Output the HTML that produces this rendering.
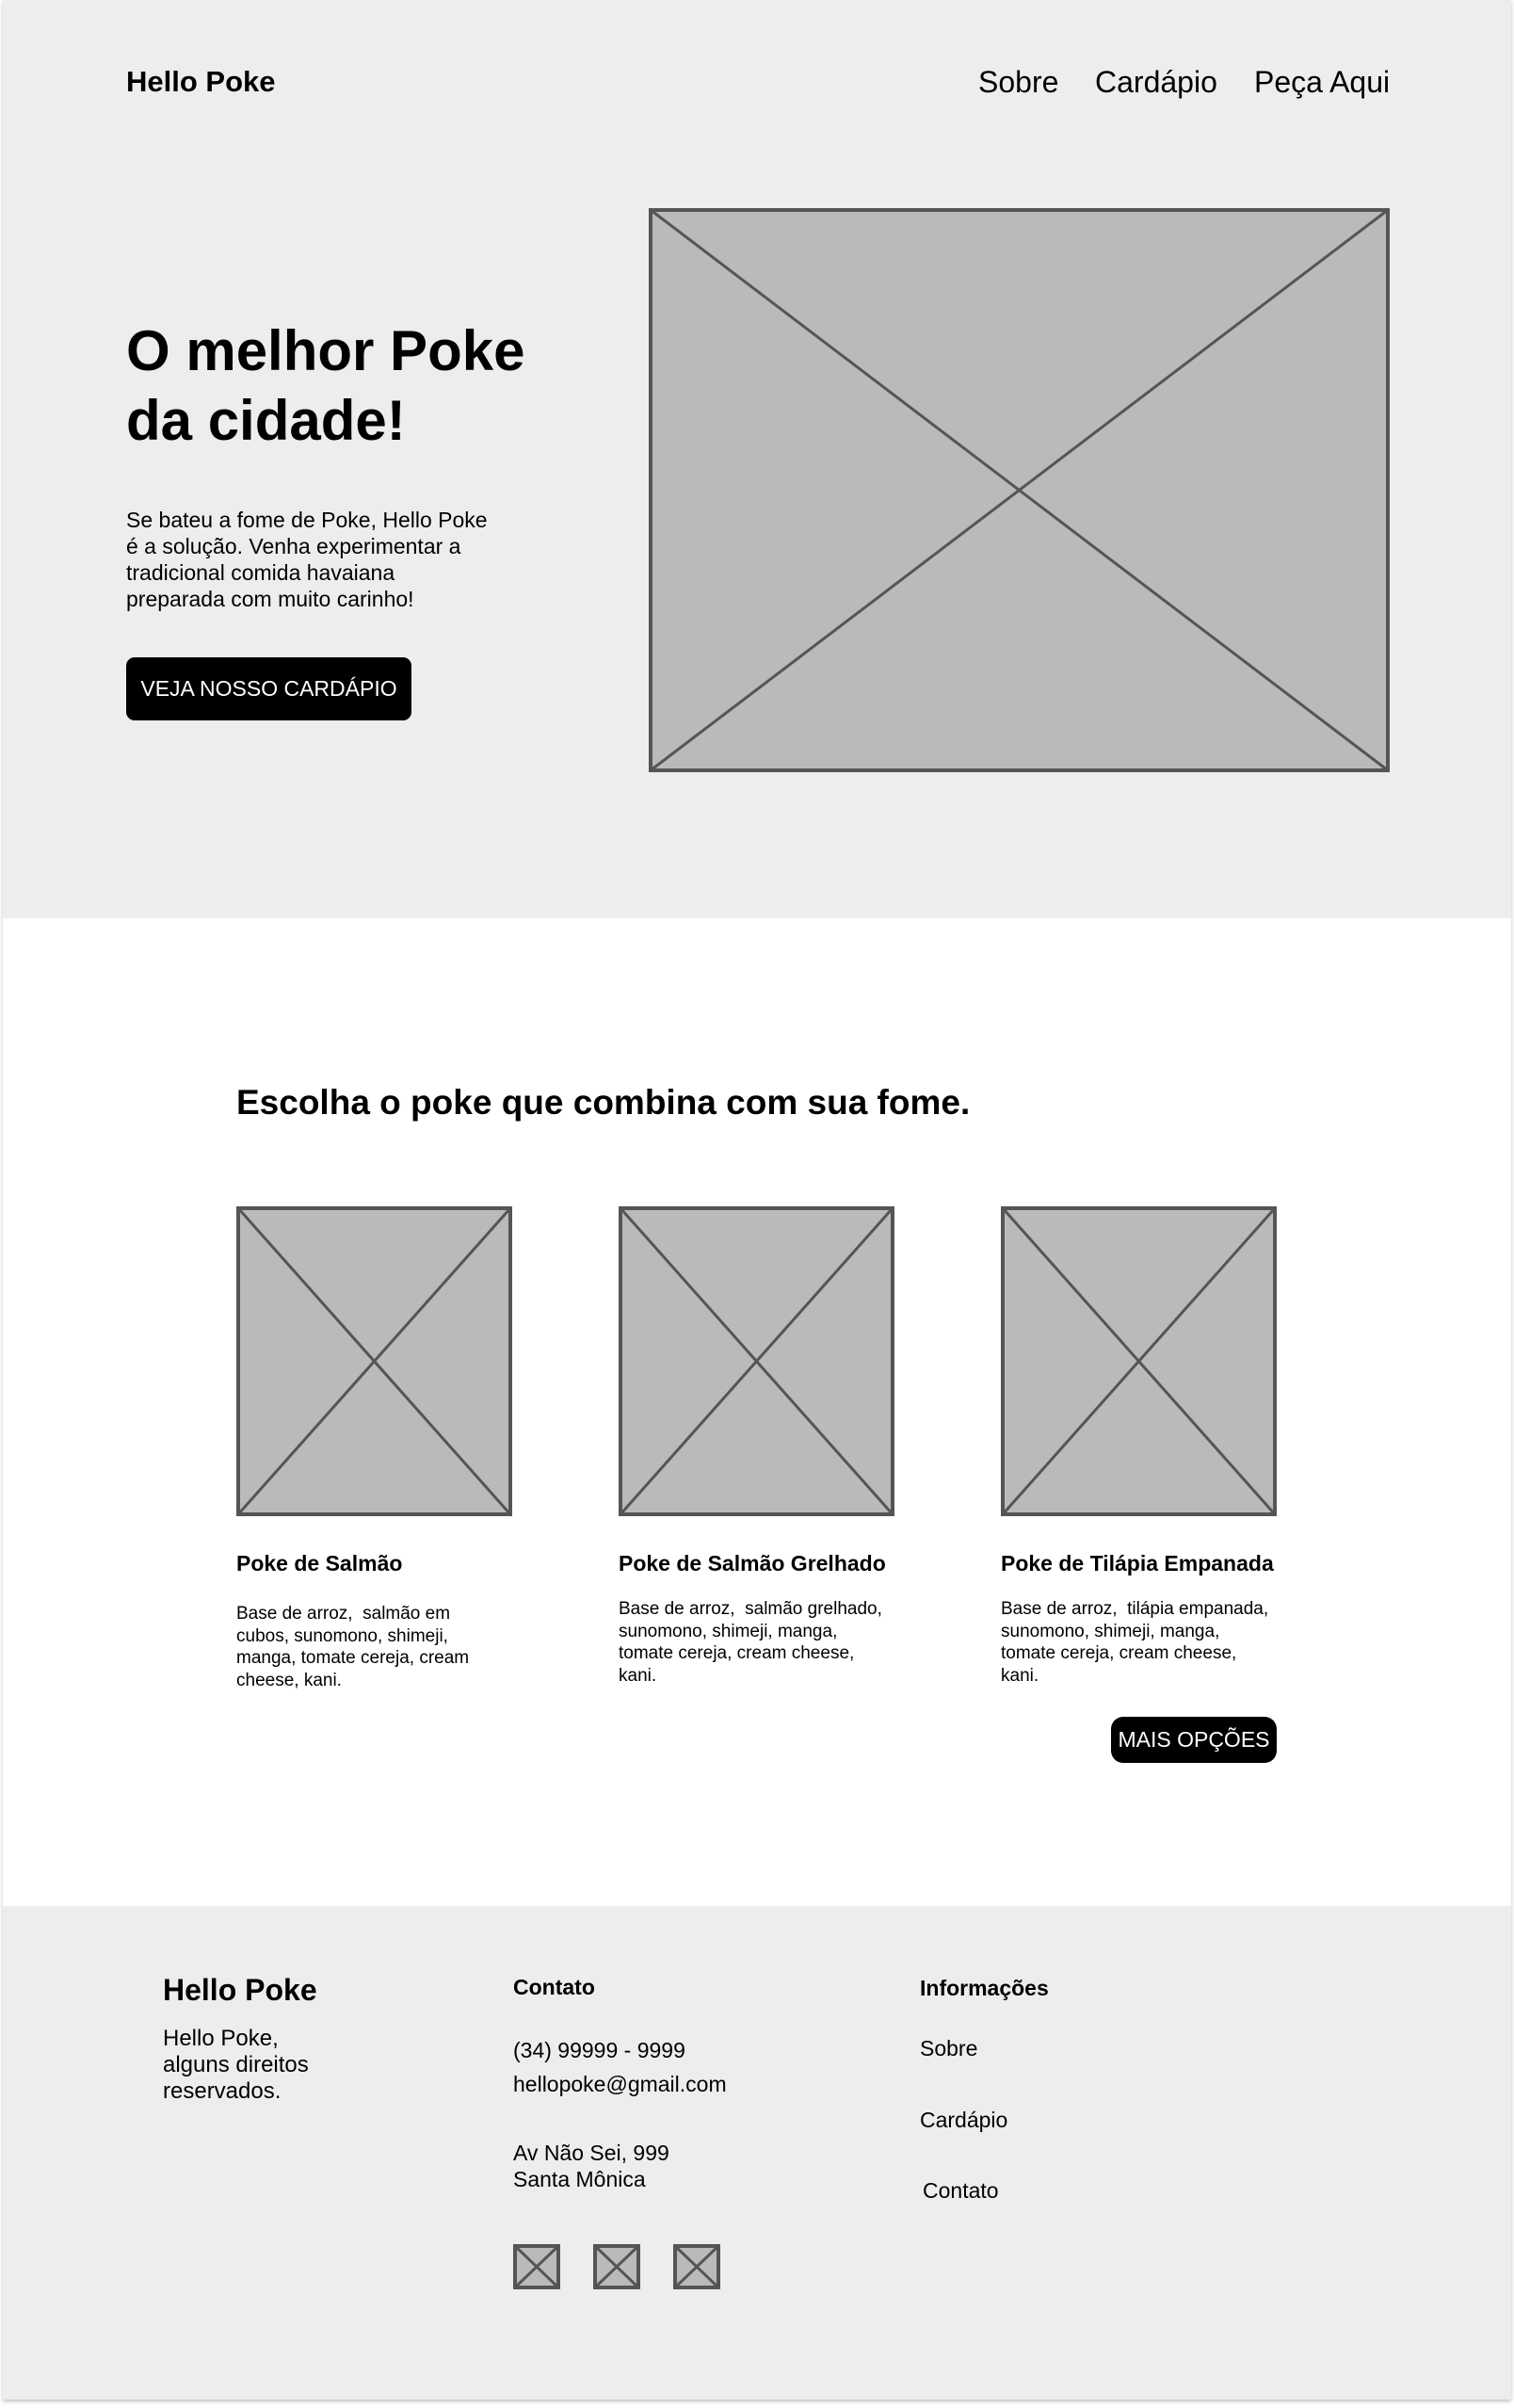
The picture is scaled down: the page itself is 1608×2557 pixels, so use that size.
<!DOCTYPE html>
<html><head><meta charset="utf-8"><style>
*{margin:0;padding:0;box-sizing:border-box}
body{width:1608px;height:2557px;background:#fff;font-family:"Liberation Sans",sans-serif;color:#000;position:relative;overflow:hidden}
.wrap{position:absolute;left:3px;top:0;width:1602px;height:2548px;background:#fff;box-shadow:0 2px 4px rgba(0,0,0,.25)}
.abs{position:absolute;white-space:nowrap}
.hero{position:absolute;left:0;top:0;width:1602px;height:975px;background:#ededed}
.foot{position:absolute;left:0;top:2024px;width:1602px;height:524px;background:#ededed}
svg.ph{position:absolute}
.btn{position:absolute;background:#000;color:#fff;display:flex;align-items:center;justify-content:center}
.d{font-size:19px;line-height:23.5px;white-space:normal;width:300px}
</style></head><body><div class="wrap">
<div class="hero"></div>
<div class="foot"></div>
<div class="abs" style="left:131px;top:69px;font-size:31px;font-weight:bold">Hello Poke</div>
<div class="abs" style="left:1036px;top:69px;font-size:32px">Sobre</div>
<div class="abs" style="left:1160px;top:69px;font-size:32px">Cardápio</div>
<div class="abs" style="left:1329px;top:69px;font-size:32px">Peça Aqui</div>
<svg class="ph" style="left:686px;top:221px" width="787" height="599"><rect x="2" y="2" width="783" height="595" fill="#bababa" stroke="#555" stroke-width="4"/><path d="M2 2L785 597M785 2L2 597" stroke="#555" stroke-width="3"/></svg>
<div class="abs" style="left:131px;top:336px;font-size:60px;font-weight:bold;line-height:74px">O melhor Poke<br>da cidade!</div>
<div class="abs" style="left:131px;top:538px;font-size:23px;line-height:28px">Se bateu a fome de Poke, Hello Poke<br>é a solução. Venha experimentar a<br>tradicional comida havaiana<br>preparada com muito carinho!</div>
<div class="btn" style="left:131px;top:698px;width:303px;height:67px;border-radius:9px;font-size:23px">VEJA NOSSO CARDÁPIO</div>
<div class="abs" style="left:248px;top:1150px;font-size:37px;font-weight:bold">Escolha o poke que combina com sua fome.</div>
<svg class="ph" style="left:248px;top:1281px" width="293" height="329"><rect x="2" y="2" width="289" height="325" fill="#bababa" stroke="#555" stroke-width="4"/><path d="M2 2L291 327M291 2L2 327" stroke="#555" stroke-width="3"/></svg>
<svg class="ph" style="left:654px;top:1281px" width="293" height="329"><rect x="2" y="2" width="289" height="325" fill="#bababa" stroke="#555" stroke-width="4"/><path d="M2 2L291 327M291 2L2 327" stroke="#555" stroke-width="3"/></svg>
<svg class="ph" style="left:1060px;top:1281px" width="293" height="329"><rect x="2" y="2" width="289" height="325" fill="#bababa" stroke="#555" stroke-width="4"/><path d="M2 2L291 327M291 2L2 327" stroke="#555" stroke-width="3"/></svg>
<div class="abs" style="left:248px;top:1647px;font-size:23px;font-weight:bold">Poke de Salmão</div>
<div class="abs" style="left:654px;top:1647px;font-size:23px;font-weight:bold">Poke de Salmão Grelhado</div>
<div class="abs" style="left:1060px;top:1647px;font-size:23px;font-weight:bold">Poke de Tilápia Empanada</div>
<div class="abs d" style="left:248px;top:1702px">Base de arroz,&nbsp; salmão em<br>cubos, sunomono, shimeji,<br>manga, tomate cereja, cream<br>cheese, kani.</div>
<div class="abs d" style="left:654px;top:1697px">Base de arroz,&nbsp; salmão grelhado,<br>sunomono, shimeji, manga,<br>tomate cereja, cream cheese,<br>kani.</div>
<div class="abs d" style="left:1060px;top:1697px">Base de arroz,&nbsp; tilápia empanada,<br>sunomono, shimeji, manga,<br>tomate cereja, cream cheese,<br>kani.</div>
<div class="btn" style="left:1177px;top:1823px;width:176px;height:49px;border-radius:13px;font-size:23px">MAIS OPÇÕES</div>
<div class="abs" style="left:170px;top:2095px;font-size:32px;font-weight:bold">Hello Poke</div>
<div class="abs" style="left:170px;top:2151px;font-size:24px;line-height:28px">Hello Poke,<br>alguns direitos<br>reservados.</div>
<div class="abs" style="left:542px;top:2097px;font-size:23px;font-weight:bold">Contato</div>
<div class="abs" style="left:542px;top:2164px;font-size:23px">(34) 99999 - 9999</div>
<div class="abs" style="left:542px;top:2200px;font-size:23px">hellopoke@gmail.com</div>
<div class="abs" style="left:542px;top:2272px;font-size:23px;line-height:28px">Av Não Sei, 999<br>Santa Mônica</div>
<svg class="ph" style="left:542px;top:2383px" width="50" height="48"><rect x="2" y="2" width="46" height="44" fill="#bababa" stroke="#555" stroke-width="4"/><path d="M2 2L48 46M48 2L2 46" stroke="#555" stroke-width="3"/></svg>
<svg class="ph" style="left:627px;top:2383px" width="50" height="48"><rect x="2" y="2" width="46" height="44" fill="#bababa" stroke="#555" stroke-width="4"/><path d="M2 2L48 46M48 2L2 46" stroke="#555" stroke-width="3"/></svg>
<svg class="ph" style="left:712px;top:2383px" width="50" height="48"><rect x="2" y="2" width="46" height="44" fill="#bababa" stroke="#555" stroke-width="4"/><path d="M2 2L48 46M48 2L2 46" stroke="#555" stroke-width="3"/></svg>
<div class="abs" style="left:974px;top:2098px;font-size:23px;font-weight:bold">Informações</div>
<div class="abs" style="left:974px;top:2162px;font-size:23px">Sobre</div>
<div class="abs" style="left:974px;top:2238px;font-size:23px">Cardápio</div>
<div class="abs" style="left:977px;top:2313px;font-size:23px">Contato</div>
</div></body></html>
